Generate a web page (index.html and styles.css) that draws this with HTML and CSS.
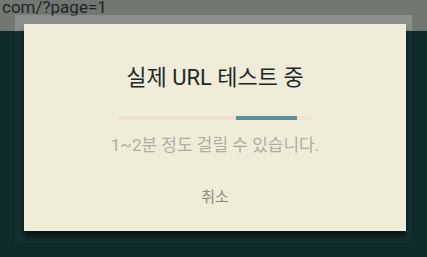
FILE: index.html
```html
<!DOCTYPE html>
<html lang="ko">
<head>
  <meta charset="UTF-8">
  <title>실제 URL 테스트 중</title>
  <link rel="stylesheet" href="styles.css">
</head>
<body>
  <div class="topbar"><div class="address">com/?page=1</div></div>
  <div class="page"></div>

  <div class="backdrop">
    <div class="halo">
      <div class="dialog">
        <h2 class="dialog-title">실제 URL 테스트 중</h2>
        <div class="progress">
          <div class="progress-bar"></div>
        </div>
        <p class="dialog-text">1~2분 정도 걸릴 수 있습니다.</p>
        <button type="button" class="cancel">취소</button>
      </div>
    </div>
  </div>
</body>
</html>
```

FILE: styles.css
```css
body {
  margin: 0;
  width: 427px;
  height: 257px;
  overflow: hidden;
  background: #0f2b2b;
  font-family: Roboto, "Noto Sans CJK KR", sans-serif;
  position: relative;
}
.topbar {
  height: 31px;
  display: flow-root;
  overflow: hidden;
  background: #727772;
  color: #1c2624;
  padding-left: 2px;
}
.address {
  margin-top: -1px;
  font-size: 17px;
  line-height: 17px;
  white-space: nowrap;
}
.backdrop {
  position: absolute;
  inset: 0;
  padding: 15px;
}
.halo {
  width: 397px;
  height: 228px;
  box-sizing: border-box;
  padding: 9px 6px 12px 9px;
  background: linear-gradient(to bottom, rgba(255, 255, 255, 0.18) 0, rgba(255, 255, 255, 0.18) 16px, rgba(255, 255, 255, 0.025) 16px);
}
.dialog {
  width: 382px;
  height: 207px;
  background: #f0ecda;
  box-shadow: 0 6px 6px rgba(0, 0, 0, 0.55);
  display: flex;
  flex-direction: column;
  align-items: center;
  box-sizing: border-box;
  padding-top: 41px;
}
.dialog-title {
  margin: 0;
  font-size: 22px;
  font-weight: 400;
  line-height: 26px;
  color: #1d2a28;
}
.progress {
  width: 192px;
  height: 4px;
  margin-top: 25px;
  background: #f0e0d2;
  position: relative;
}
.progress-bar {
  position: absolute;
  left: 117px;
  width: 61px;
  height: 4px;
  background: #5f8f94;
}
.dialog-text {
  margin: 14px 0 0;
  font-size: 17px;
  line-height: 22px;
  color: #b2aba2;
}
.cancel {
  margin-top: 31px;
  border: none;
  background: none;
  padding: 0;
  font-family: inherit;
  font-size: 15px;
  line-height: 20px;
  color: #8a8a80;
  cursor: pointer;
}
```
